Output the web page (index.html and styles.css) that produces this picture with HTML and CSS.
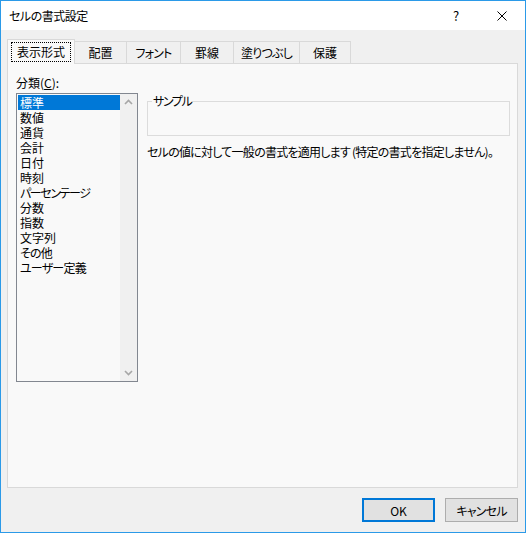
FILE: index.html
```html
<!DOCTYPE html>
<html lang="ja">
<head>
<meta charset="utf-8">
<title>セルの書式設定</title>
<link rel="stylesheet" href="styles.css">
</head>
<body>
<div class="window">
  <div class="titlebar">
    <span class="title">セルの書式設定</span>
    <span class="caption-btn help">?</span>
    <span class="caption-btn close">
      <svg width="10" height="10" viewBox="0 0 10 10"><path d="M0.5 0.5 L9.5 9.5 M9.5 0.5 L0.5 9.5" stroke="#000" stroke-width="1" fill="none"/></svg>
    </span>
  </div>
  <div class="tabs">
    <div class="tab tab-selected"><span class="focus">表示形式</span></div>
    <div class="tab tab-2">配置</div>
    <div class="tab tab-3 kana">フォント</div>
    <div class="tab tab-4">罫線</div>
    <div class="tab tab-5 kana">塗りつぶし</div>
    <div class="tab tab-6">保護</div>
  </div>
  <div class="panel">
    <div class="left-col">
      <div class="label">分類(<u>C</u>):</div>
      <div class="listbox">
        <ul class="items">
          <li class="item selected">標準</li>
          <li class="item">数値</li>
          <li class="item">通貨</li>
          <li class="item">会計</li>
          <li class="item">日付</li>
          <li class="item">時刻</li>
          <li class="item kana-wide">パーセンテージ</li>
          <li class="item">分数</li>
          <li class="item">指数</li>
          <li class="item">文字列</li>
          <li class="item kana">その他</li>
          <li class="item kana">ユーザー定義</li>
        </ul>
        <div class="scrollbar">
          <svg class="arrow" width="17" height="17" viewBox="0 0 17 17"><path d="M5 10 L8.5 6.5 L12 10" stroke="#a6a6a6" stroke-width="1.6" fill="none"/></svg>
          <svg class="arrow" width="17" height="17" viewBox="0 0 17 17"><path d="M5 7 L8.5 10.5 L12 7" stroke="#a6a6a6" stroke-width="1.6" fill="none"/></svg>
        </div>
      </div>
    </div>
    <div class="right-col">
      <div class="group">
        <span class="group-label kana-wide">サンプル</span>
      </div>
      <p class="desc">セルの値に対して一般の書式を適用します (特定の書式を指定しません)。</p>
    </div>
  </div>
  <div class="buttons">
    <div class="btn btn-default">OK</div>
    <div class="btn kana">キャンセル</div>
  </div>
</div>
</body>
</html>
```

FILE: styles.css
```css
html, body {
  margin: 0;
  padding: 0;
}
body {
  width: 526px;
  height: 533px;
  overflow: hidden;
  background: #f0f0f0;
}
.window {
  box-sizing: border-box;
  width: 526px;
  height: 533px;
  border: 1px solid #2b9ae8;
  background: #f0f0f0;
  display: flex;
  flex-direction: column;
  font-family: "Noto Sans CJK JP", "Noto Sans", sans-serif;
  font-size: 12px;
  font-feature-settings: "palt";
  color: #000;
}
.kana {
  letter-spacing: -0.8px;
}
.kana-wide {
  letter-spacing: -1.4px;
}
.titlebar {
  height: 29px;
  background: #ffffff;
  display: flex;
  align-items: center;
  padding-left: 8px;
}
.title {
  flex: 1;
  line-height: 15px;
  letter-spacing: -0.5px;
}
.caption-btn {
  width: 46px;
  height: 29px;
  display: flex;
  align-items: center;
  justify-content: center;
}
.help {
  font-size: 13px;
}
.tabs {
  display: flex;
  align-items: flex-end;
  padding-left: 6px;
  margin-top: 9px;
  height: 24px;
  position: relative;
  z-index: 2;
}
.tab {
  box-sizing: border-box;
  height: 22px;
  border: 1px solid #d9d9d9;
  border-bottom: none;
  margin-right: -1px;
  background: #f0f0f0;
  display: flex;
  align-items: center;
  justify-content: center;
  line-height: 15px;
}
.tab-selected {
  width: 68px;
  height: 25px;
  margin-bottom: -1px;
  background: #f9f9f9;
  position: relative;
  z-index: 3;
}
.tab-2 { width: 53px; }
.tab-3 { width: 55px; }
.tab-4 { width: 54px; }
.tab-5 { width: 67px; }
.tab-6 { width: 52px; }
.focus {
  border: 1px dotted #000;
  padding: 1px 5px 2px;
  margin-top: -1px;
}
.panel {
  box-sizing: border-box;
  height: 425px;
  margin: 0 7px 0 6px;
  border: 1px solid #d9d9d9;
  background: #f9f9f9;
  display: flex;
  gap: 9px;
  padding: 11px 8px 0 8px;
}
.left-col {
  display: flex;
  flex-direction: column;
}
.label {
  line-height: 15px;
  height: 15px;
  margin-bottom: 3px;
}
.listbox {
  box-sizing: border-box;
  width: 122px;
  height: 289px;
  border: 1px solid #828790;
  background: #f9f9f9;
  display: flex;
}
.items {
  list-style: none;
  margin: 0;
  padding: 1px 0 0 1px;
  flex: 1;
}
.item {
  height: 15px;
  line-height: 15px;
  padding-left: 2px;
  white-space: nowrap;
}
.item.selected {
  background: #0078d7;
  color: #fff;
}
.scrollbar {
  width: 17px;
  background: #f0f0f0;
  display: flex;
  flex-direction: column;
  justify-content: space-between;
}
.arrow {
  display: block;
}
.right-col {
  flex: 1;
  padding-top: 26px;
}
.group {
  box-sizing: border-box;
  width: 363px;
  height: 35px;
  border: 1px solid #dcdcdc;
  position: relative;
}
.group-label {
  position: absolute;
  top: -9px;
  left: 4px;
  padding: 0 1px;
  line-height: 15px;
  background: #f9f9f9;
}
.desc {
  margin: 8px 0 0 0;
  line-height: 15px;
  white-space: nowrap;
  letter-spacing: -0.75px;
}
.buttons {
  display: flex;
  justify-content: flex-end;
  gap: 10px;
  margin-top: 10px;
  padding-right: 7px;
}
.btn {
  box-sizing: border-box;
  width: 73px;
  height: 24px;
  border: 1px solid #adadad;
  background: #e1e1e1;
  display: flex;
  align-items: center;
  justify-content: center;
  line-height: 15px;
}
.btn-default {
  border: 2px solid #0078d7;
}
```
